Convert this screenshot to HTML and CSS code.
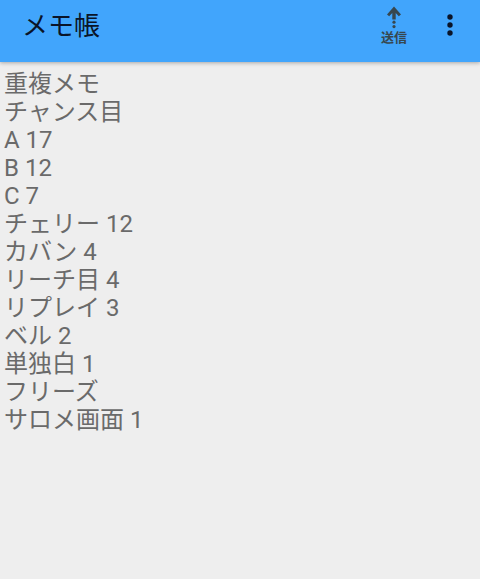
FILE: index.html
```html
<!DOCTYPE html>
<html lang="ja">
<head>
<meta charset="utf-8">
<title>メモ帳</title>
<link rel="stylesheet" href="styles.css">
</head>
<body>
<header class="bar">
  <h1 class="title">メモ帳</h1>
  <div class="send">
    <svg class="send-icon" width="16" height="24" viewBox="0 0 16 24"><path d="M1 9.4 L8 1.6 L15 9.4 L12.8 11.2 L9.7 8 V14.4 H6.3 V8 L3.2 11.2 Z" fill="#37474f"/><circle cx="8" cy="17.2" r="1.6" fill="#37474f"/><circle cx="8" cy="21.6" r="1.6" fill="#37474f"/></svg>
    <span class="send-label">送信</span>
  </div>
  <svg class="more" width="6" height="24" viewBox="0 0 6 24"><circle cx="3" cy="4" r="2.7" fill="#0a1428"/><circle cx="3" cy="12" r="2.7" fill="#0a1428"/><circle cx="3" cy="20" r="2.7" fill="#0a1428"/></svg>
</header>
<main class="memo">
  <div>重複メモ</div>
  <div>チャンス目</div>
  <div>A 17</div>
  <div>B 12</div>
  <div>C 7</div>
  <div>チェリー 12</div>
  <div>カバン 4</div>
  <div>リーチ目 4</div>
  <div>リプレイ 3</div>
  <div>ベル 2</div>
  <div>単独白 1</div>
  <div>フリーズ</div>
  <div>サロメ画面 1</div>
</main>
</body>
</html>
```
FILE: styles.css
```css
html, body { margin: 0; padding: 0; height: 100%; }
body {
  background: #eeeeee;
  font-family: Roboto, "Noto Sans CJK JP", sans-serif;
  overflow: hidden;
}
.bar {
  height: 62px;
  background: #41a5fc;
  box-shadow: 0 1px 4px rgba(0,0,0,.3);
  display: flex;
  align-items: flex-start;
  padding: 4px 27px 0 22px;
  box-sizing: border-box;
}
.title {
  margin: 0 auto 0 0;
  font-size: 26px;
  line-height: 44px;
  font-weight: 400;
  color: #0a1428;
}
.send {
  display: flex;
  flex-direction: column;
  align-items: center;
  margin-top: 1px;
  margin-right: 40px;
  color: #37474f;
}
.send-label { font-size: 13px; font-weight: 700; line-height: 14px; margin-top: 2px; }
.more { margin-top: 9px; }
.memo {
  padding: 8px 0 0 4px;
  font-size: 24px;
  line-height: 28px;
  color: #6a6a6a;
}
```
